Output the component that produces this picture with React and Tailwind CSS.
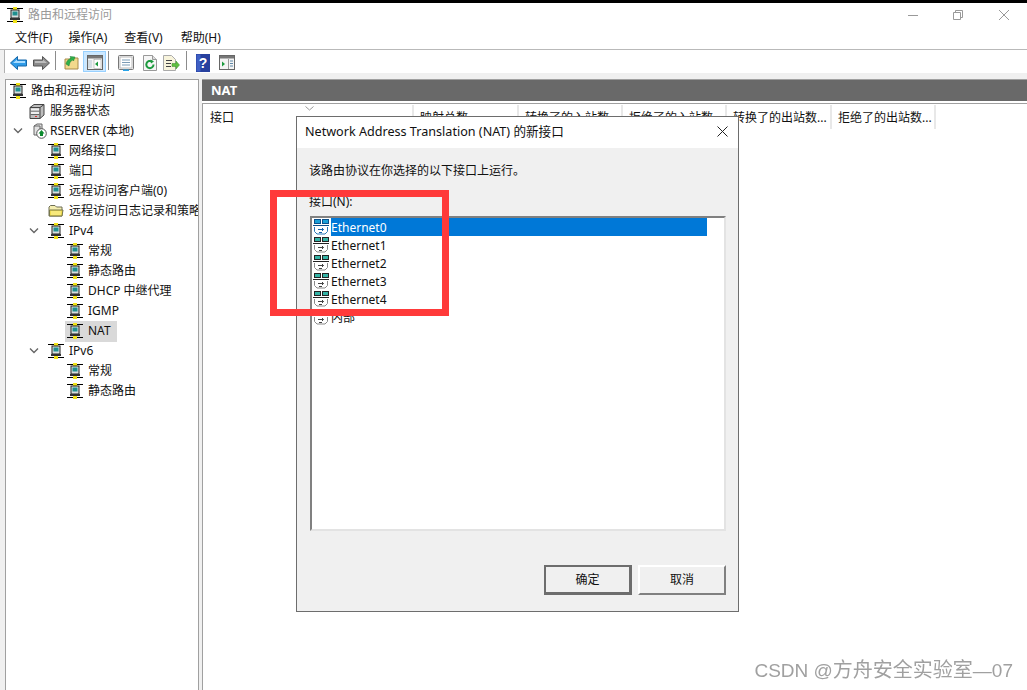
import React from 'react';

function RouterIcon({ className = '' }) {
  return (
    <svg width="16" height="16" viewBox="0 0 16 16" className={`shrink-0 ${className}`}>
      <rect x="0" y="1" width="16" height="1" fill="#000" />
      <rect x="6" y="0" width="4" height="3" fill="#f2e418" />
      <rect x="4" y="3" width="8" height="8" fill="#d8dede" stroke="#222" strokeWidth="1" />
      <rect x="5.5" y="4.5" width="5" height="4" fill="#1f8f8f" />
      <rect x="3" y="11" width="10" height="2" fill="#333" />
      <rect x="0" y="14" width="16" height="1" fill="#000" />
      <rect x="6" y="13" width="4" height="3" fill="#f2e418" />
    </svg>
  );
}

function ServerStatusIcon() {
  return (
    <svg width="16" height="16" viewBox="0 0 16 16" className="shrink-0">
      <path d="M1 4.5 L5 1.5 H15 V12 L11 15.5 H1 Z" fill="#bdbdbd" stroke="#444" />
      <path d="M1 4.5 H11 V15.5 M11 4.5 L15 1.5" fill="none" stroke="#444" />
      <path d="M1.5 8 H10.5 M1.5 11.5 H10.5" stroke="#666" />
      <rect x="2" y="5.5" width="8" height="2" fill="#efefef" />
      <rect x="2" y="9" width="8" height="2" fill="#efefef" />
      <rect x="6" y="13" width="2" height="1" fill="#d33" />
    </svg>
  );
}

function RServerIcon() {
  return (
    <svg width="16" height="16" viewBox="0 0 16 16" className="shrink-0 -mr-[3px]">
      <path d="M2 3 L5 1 H10 V12 H2 Z" fill="#e2e2e2" stroke="#666" />
      <path d="M2 3 H8 V13" fill="none" stroke="#666" />
      <circle cx="9.5" cy="10.5" r="4.8" fill="#fff" stroke="#555" />
      <path d="M9.5 7 L12.5 10.5 H11 V13 H8 V10.5 H6.5 Z" fill="#0c8a2e" />
    </svg>
  );
}

function FolderIcon() {
  return (
    <svg width="16" height="16" viewBox="0 0 16 16" className="shrink-0">
      <path d="M1 4 L2.5 2.5 H7 L8.5 4 H14 V13 H1 Z" fill="#f5eeb0" stroke="#6f6f55" />
      <path d="M1.5 7 H15 L14 13 H1.5 Z" fill="#efdc4e" stroke="#77774c" />
      <path d="M3 9 H13 M3 11 H13" stroke="#fff6a8" />
    </svg>
  );
}

function NetIcon({ active }) {
  const screen = active ? '#19a0d8' : '#35b3a6';
  const line = active ? '#0a4f8a' : '#222';
  const tray = active ? '#2a79b8' : '#8a8a8a';
  const arrow = active ? '#1460a8' : '#444';
  return (
    <svg width="16" height="16" viewBox="0 0 16 16" className="shrink-0">
      <rect x="1.5" y="0.5" width="6" height="4" fill={screen} stroke={line} />
      <rect x="9.5" y="0.5" width="6" height="4" fill={screen} stroke={line} />
      <path d="M0 6.5 H16" stroke={line} />
      <path d="M1.5 8 V12.5 L4 15 H12 L14.5 12.5 V8" fill="#fff" stroke={tray} />
      <path d="M5 10.5 H10.5 M9 9 L10.5 10.5 L9 12 M6 13.5 H9" fill="none" stroke={arrow} />
    </svg>
  );
}

function Chevron() {
  return (
    <svg width="10" height="6" viewBox="0 0 10 6" className="shrink-0">
      <path d="M1 0.5 L5 4.5 L9 0.5" fill="none" stroke="#666" strokeWidth="1.4" />
    </svg>
  );
}

function TreeRow({ indent, icon, expand, selected, children }) {
  return (
    <div className={`flex items-center h-5 whitespace-nowrap ${indent}`}>
      {expand && <span className="w-5 flex justify-start pl-[1px] -ml-5"><Chevron /></span>}
      <span className={`flex items-center h-[21px] ${selected ? 'bg-[#d9d9d9] pr-[6px] pl-[2px] -ml-[2px]' : ''}`}>
        {icon}
        <span className="ml-[5px]">{children}</span>
      </span>
    </div>
  );
}

function ToolButton({ className = '', children }) {
  return <div className={`w-[23px] h-[21px] pt-[2px] flex items-center justify-center ${className}`}>{children}</div>;
}

function ToolSep({ className = '' }) {
  return <div className={`w-px h-[19px] bg-[#8c8c8c] ${className}`} />;
}

function HeaderCell({ className = 'w-[104px]', children }) {
  return (
    <div className={`h-[24px] pl-[6px] pt-px flex items-center border-r-2 border-[#e8e8e8] whitespace-nowrap overflow-hidden ${className}`}>
      {children}
    </div>
  );
}

const interfaces = ['Ethernet0', 'Ethernet1', 'Ethernet2', 'Ethernet3', 'Ethernet4', '内部'];

export default function App() {
  return (
    <div className="relative w-[1027px] h-[690px] overflow-hidden bg-[#f0f0f0] text-[12px] text-[#111] font-['Noto_Sans','Noto_Sans_CJK_SC',sans-serif] flex flex-col">
      <div className="h-[3px] bg-black" />

      <div className="h-[24px] bg-white flex items-center pl-[7px]">
        <RouterIcon />
        <span className="ml-[5px] text-[#999]">路由和远程访问</span>
        <div className="ml-auto flex items-center">
          <svg width="118" height="12" viewBox="0 0 118 12" className="mr-px">
            <path d="M0 6.5 H10" stroke="#999" />
            <path d="M45.5 3.5 H52.5 V10.5 H45.5 Z M47.5 3.5 V1.5 H54.5 V8.5 H52.5" fill="none" stroke="#999" />
            <path d="M91 1 L101 11 M101 1 L91 11" stroke="#999" />
          </svg>
        </div>
      </div>

      <div className="h-[22px] bg-white flex items-center pl-[15px] gap-4">
        <span>文件(F)</span>
        <span>操作(A)</span>
        <span className="ml-[1px]">查看(V)</span>
        <span className="ml-[2px]">帮助(H)</span>
      </div>

      <div className="h-px bg-[#b9b9b9]" />

      <div className="ml-[4px] h-[23px] bg-white border-l border-[#b0b0b0] flex items-start pl-[2px] pt-px">
        <ToolButton>
          <svg width="17" height="14" viewBox="0 0 17 14">
            <path d="M0.5 7 L7.5 0.5 V4 H16.5 V10 H7.5 V13.5 Z" fill="#2f9be8" stroke="#1667a8" />
            <path d="M3 7 L7 3.5 V5 H15 V7 Z" fill="#a8dcff" />
          </svg>
        </ToolButton>
        <ToolButton>
          <svg width="17" height="14" viewBox="0 0 17 14">
            <path d="M16.5 7 L9.5 0.5 V4 H0.5 V10 H9.5 V13.5 Z" fill="#8a8a8a" stroke="#555" />
            <path d="M2 5 H10 V3.5 L14 7 H2 Z" fill="#bdbdbd" />
          </svg>
        </ToolButton>
        <ToolSep className="ml-[2px]" />
        <ToolButton className="ml-[4px]">
          <svg width="16" height="16" viewBox="0 0 16 16">
            <path d="M1 4 H6 L7 3 H14 V14 H1 Z" fill="#f2d98c" stroke="#a88a4a" />
            <path d="M2 9 C3 5 5 4 7 3.5 L6 1.5 L11 2 L9.5 6 L8.5 5 C6.5 6 5.5 8 5 11 Z" fill="#2fb14a" stroke="#1c7a30" strokeWidth="0.5" />
          </svg>
        </ToolButton>
        <ToolButton className="bg-[#cce8ff] border border-[#99d1ff]">
          <svg width="16" height="15" viewBox="0 0 16 15">
            <rect x="0.5" y="0.5" width="15" height="14" fill="#f4f4f4" stroke="#666" />
            <rect x="1" y="1" width="14" height="2.5" fill="#777" />
            <rect x="7" y="4.5" width="7" height="9" fill="#fff" stroke="#999" strokeWidth="0.5" />
            <path d="M2 5 V13 M4 5 V13" stroke="#b5c8d5" />
            <path d="M11 6.5 V11.5 L8 9 Z" fill="#1c9a3e" />
          </svg>
        </ToolButton>
        <ToolSep className="ml-[2px]" />
        <ToolButton className="ml-[5px]">
          <svg width="16" height="16" viewBox="0 0 16 16">
            <rect x="0.5" y="0.5" width="15" height="14" rx="1" fill="#f4f4f4" stroke="#777" />
            <rect x="2" y="2" width="12" height="11" fill="#fff" stroke="#bbb" />
            <path d="M4 5 H12 M4 7.5 H12 M4 10 H12" stroke="#7b9bb5" />
            <rect x="5" y="14.5" width="6" height="1.5" fill="#27a3e8" />
          </svg>
        </ToolButton>
        <ToolButton className="ml-[1px]">
          <svg width="14" height="16" viewBox="0 0 14 16">
            <path d="M0.5 0.5 H9.5 L13.5 4.5 V15.5 H0.5 Z" fill="#f6f6f6" stroke="#999" />
            <path d="M9.5 0.5 V4.5 H13.5" fill="#ddd" stroke="#999" />
            <path d="M10.5 9.5 A3.6 3.6 0 1 1 9 6.6" fill="none" stroke="#1c9a3e" strokeWidth="2" />
            <path d="M7.5 4.5 L11 6.5 L8 8.5 Z" fill="#1c9a3e" />
          </svg>
        </ToolButton>
        <ToolButton className="-ml-[1px]">
          <svg width="17" height="16" viewBox="0 0 17 16">
            <path d="M0.5 0.5 H8.5 L12.5 4.5 V15.5 H0.5 Z" fill="#f8f4dc" stroke="#aaa" />
            <path d="M3 5.5 H9 M3 8.5 H8 M3 11.5 H8" stroke="#444" />
            <path d="M9 8.5 H13 V6 L16.5 10 L13 14 V11.5 H9 Z" fill="#5fbf3f" stroke="#3d8f2a" strokeWidth="0.5" />
          </svg>
        </ToolButton>
        <ToolSep className="ml-[3px]" />
        <ToolButton className="ml-[4px]">
          <svg width="14" height="18" viewBox="0 0 14 18">
            <rect width="14" height="18" fill="#27409e" />
            <rect x="0.5" y="0.5" width="4" height="17" fill="#3f5fc4" />
            <text x="7" y="14" textAnchor="middle" fontSize="14" fontWeight="700" fill="#fff" fontFamily="Liberation Sans, sans-serif">?</text>
          </svg>
        </ToolButton>
        <ToolButton className="ml-[1px]">
          <svg width="16" height="15" viewBox="0 0 16 15">
            <rect x="0.5" y="0.5" width="15" height="14" fill="#f4f4f4" stroke="#666" />
            <rect x="1" y="1" width="14" height="2.5" fill="#777" />
            <path d="M3 6.5 V11.5 L6 9 Z" fill="#1c9a3e" />
            <path d="M9.5 4 V14" stroke="#999" />
            <path d="M11 6 H14 M11 8.5 H14 M11 11 H14" stroke="#5f88a8" />
          </svg>
        </ToolButton>
      </div>

      <div className="flex-1 min-h-0 mt-[6px] pl-[5px] flex gap-[3px]">
        <div className="w-[194px] bg-white border-t border-x border-[#a0a0a0] pt-px overflow-hidden">
          <TreeRow indent="pl-[4px]" icon={<RouterIcon />}>路由和远程访问</TreeRow>
          <TreeRow indent="pl-[23px]" icon={<ServerStatusIcon />}>服务器状态</TreeRow>
          <TreeRow indent="pl-[26px]" icon={<RServerIcon />} expand>RSERVER (本地)</TreeRow>
          <TreeRow indent="pl-[42px]" icon={<RouterIcon />}>网络接口</TreeRow>
          <TreeRow indent="pl-[42px]" icon={<RouterIcon />}>端口</TreeRow>
          <TreeRow indent="pl-[42px]" icon={<RouterIcon />}>远程访问客户端(0)</TreeRow>
          <TreeRow indent="pl-[42px]" icon={<FolderIcon />}>远程访问日志记录和策略</TreeRow>
          <TreeRow indent="pl-[42px]" icon={<RouterIcon />} expand>IPv4</TreeRow>
          <TreeRow indent="pl-[61px]" icon={<RouterIcon />}>常规</TreeRow>
          <TreeRow indent="pl-[61px]" icon={<RouterIcon />}>静态路由</TreeRow>
          <TreeRow indent="pl-[61px]" icon={<RouterIcon />}>DHCP 中继代理</TreeRow>
          <TreeRow indent="pl-[61px]" icon={<RouterIcon />}>IGMP</TreeRow>
          <TreeRow indent="pl-[61px]" icon={<RouterIcon />} selected>NAT</TreeRow>
          <TreeRow indent="pl-[42px]" icon={<RouterIcon />} expand>IPv6</TreeRow>
          <TreeRow indent="pl-[61px]" icon={<RouterIcon />}>常规</TreeRow>
          <TreeRow indent="pl-[61px]" icon={<RouterIcon />}>静态路由</TreeRow>
        </div>

        <div className="flex-1 min-w-0 flex flex-col">
          <div className="h-[24px] bg-[#696969] border-t border-[#a0a0a0] border-b-2 border-b-white flex items-center pl-[9px] pt-px text-[13px] font-bold text-white">
            NAT
          </div>
          <div className="flex-1 bg-white border-t border-l border-[#a0a0a0]">
            <div className="relative flex pt-px">
              <HeaderCell className="w-[211px] pl-[7px]">接口</HeaderCell>
              <HeaderCell className="w-[105px]">映射总数</HeaderCell>
              <HeaderCell>转换了的入站数...</HeaderCell>
              <HeaderCell>拒绝了的入站数...</HeaderCell>
              <HeaderCell className="w-[105px]">转换了的出站数...</HeaderCell>
              <HeaderCell>拒绝了的出站数...</HeaderCell>
              <svg width="9" height="5" viewBox="0 0 9 5" className="absolute left-[102px] top-[2px]">
                <path d="M0.5 0.5 L4.5 4 L8.5 0.5" fill="none" stroke="#999" />
              </svg>
            </div>
          </div>
        </div>
      </div>

      <div className="absolute left-[296px] top-[116px] w-[443px] h-[496px] bg-[#f0f0f0] border border-[#6d6d6d] flex flex-col">
        <div className="h-[31px] bg-white flex items-center justify-between pl-[8px] pr-[10px] text-[12.6px]">
          <span className="pb-px">Network Address Translation (NAT) 的新接口</span>
          <svg width="11" height="11" viewBox="0 0 11 11" className="mb-[2px]">
            <path d="M0.5 0.5 L10.5 10.5 M10.5 0.5 L0.5 10.5" stroke="#222" />
          </svg>
        </div>
        <div className="flex-1 flex flex-col pl-[12px] pr-[12px]">
          <div className="mt-[15px] leading-[16px]">该路由协议在你选择的以下接口上运行。</div>
          <div className="mt-[15px] leading-[16px]">接口(N):</div>
          <div className="mt-[6px] ml-[1px] h-[315px] bg-white border-2 border-t-[#808080] border-l-[#808080] border-r-[#e3e3e3] border-b-[#e3e3e3]">
            {interfaces.map((name, i) => (
              <div key={name} className="flex items-center h-[18px] pl-px whitespace-nowrap">
                <NetIcon active={i === 0} />
                <span className={`ml-[2px] pt-px h-[18px] flex items-center ${i === 0 ? 'w-[376px] bg-[#0078d7] text-white' : ''}`}>
                  {name}
                </span>
              </div>
            ))}
          </div>
          <div className="mt-[34px] flex justify-end gap-[6px]">
            <button className="w-[88px] h-[30px] bg-[#f0f0f0] border-2 border-[#6d6d6d] border-b-[3px] border-r-[3px]">确定</button>
            <button className="w-[88px] h-[30px] bg-[#f0f0f0] border-2 border-white border-r-[#808080] border-b-[#808080]">取消</button>
          </div>
        </div>
      </div>

      <div className="absolute left-[270px] top-[190px] w-[179px] h-[126px] border-[7px] border-[#ff3a3a]" />

      <div className="absolute right-[14px] bottom-[5px] text-[20px] leading-[28px] text-[#a0a0a0] whitespace-nowrap blur-[0.3px] flex items-baseline">
        <span className="text-[19px] font-['Liberation_Sans',sans-serif] whitespace-pre">CSDN @</span>
        <span>方舟安全实验室</span>
        <span className="text-[19px] font-['Liberation_Sans',sans-serif]">—07</span>
      </div>
    </div>
  );
}
